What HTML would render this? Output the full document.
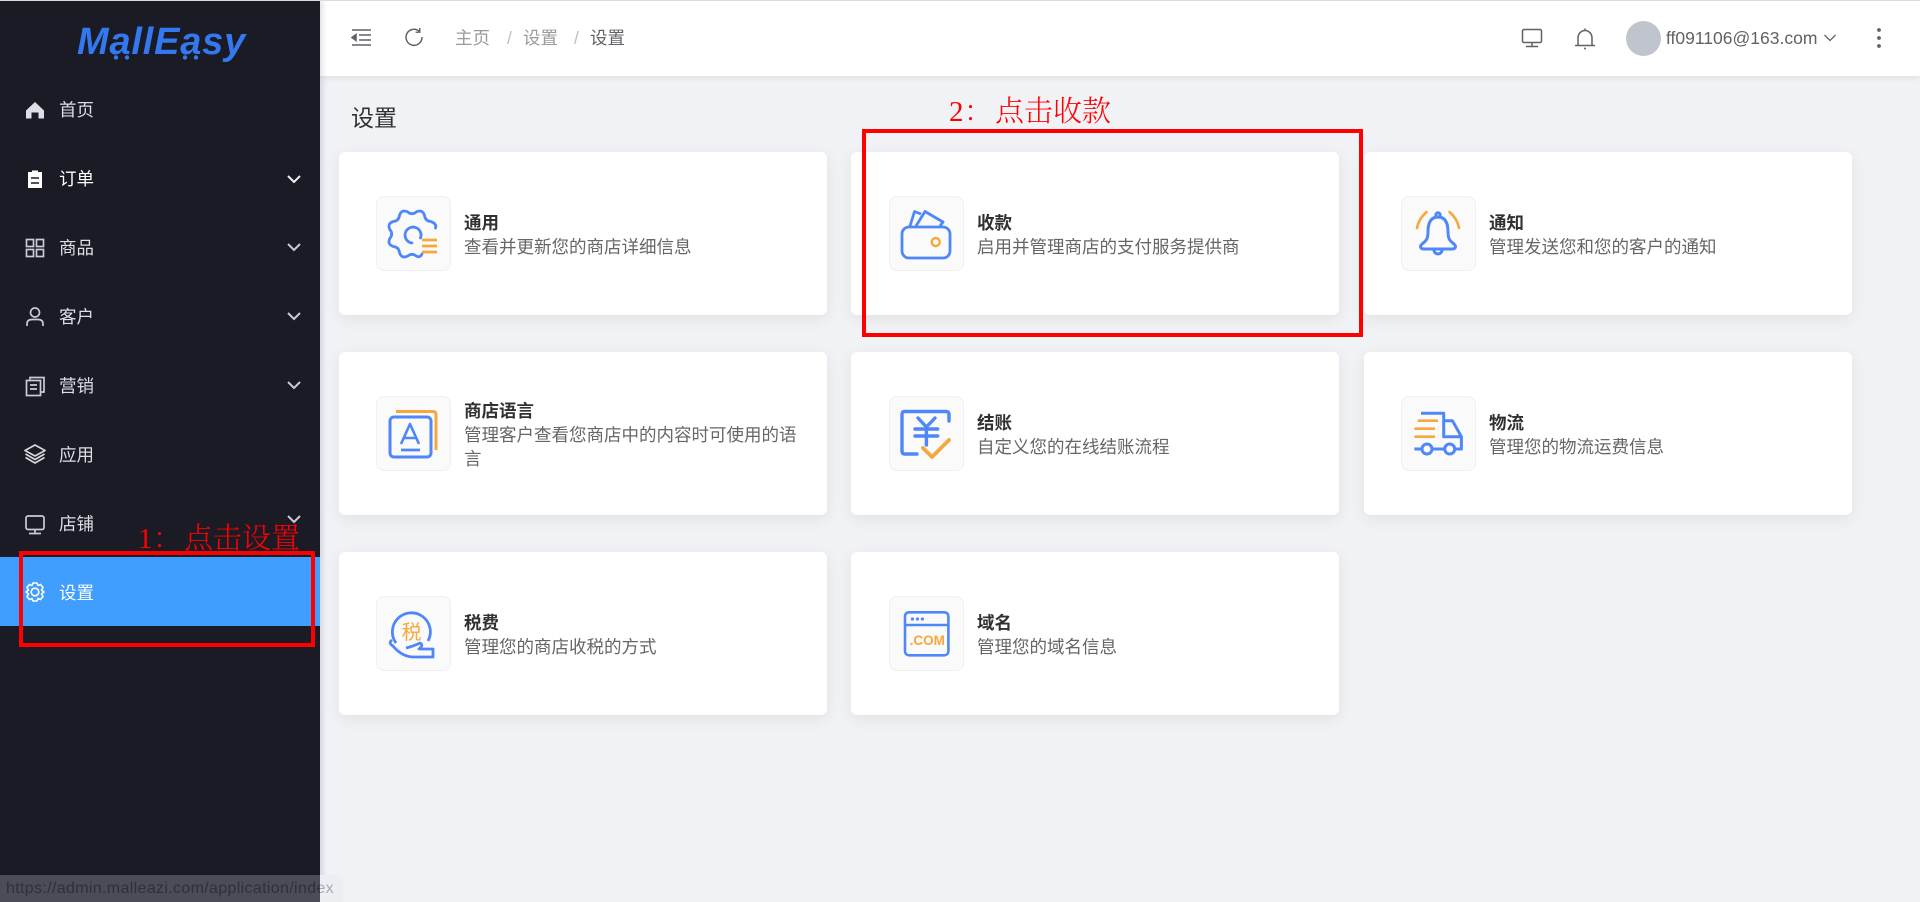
<!DOCTYPE html>
<html lang="zh-CN">
<head>
<meta charset="utf-8">
<title>设置</title>
<style>
*{box-sizing:border-box;margin:0;padding:0}
html,body{width:1920px;height:902px;overflow:hidden;background:#f0f2f5;font-family:"Liberation Sans","Noto Sans CJK SC",sans-serif;}
.abs{position:absolute}
#top{position:absolute;left:0;top:0;width:1920px;height:1px;background:#dcdcdc;z-index:9}
#side{position:absolute;left:0;top:0;width:320px;height:902px;background:#1a1b25;box-shadow:2px 0 6px rgba(0,21,41,.15);z-index:3}
.item{position:absolute;left:0;width:320px;height:69px;color:#dcdfe6;font-size:17.5px;line-height:69px}
.item span{position:absolute;left:59px;top:2px}
.item svg.i{position:absolute;left:24px;top:25px;width:22px;height:22px}
.item svg.c{position:absolute;left:286px;top:30px;width:16px;height:12px}
.item.on{background:#409eff;color:#fff}
#head{position:absolute;left:320px;top:0;width:1600px;height:76px;background:#fff;box-shadow:0 1px 6px rgba(0,21,41,.1);z-index:2}
.bc{position:absolute;top:26px;font-size:17.5px;line-height:24px;color:#9a9a9a}
#email{position:absolute;left:1346px;top:26px;font-size:17.5px;line-height:24px;color:#606266}
#title{position:absolute;left:351px;top:101px;font-size:23px;line-height:34px;color:#303133}
.card{position:absolute;width:487.5px;height:163px;background:#fff;border-radius:6px;box-shadow:0 4px 16px rgba(0,0,0,.07)}
.box{position:absolute;left:37px;top:44px;width:75px;height:75px;background:#fafafa;border:1px solid #f0f0f0;border-radius:8px}
.box svg{position:absolute;left:-1px;top:-1px;width:75px;height:75px}
.txt{position:absolute;left:125px;right:24px;top:58px;font-size:17.5px;line-height:24.5px;color:#666}
.txt.two{top:46px}
.txt b{display:block;color:#303133;font-weight:700;position:relative;top:1px}
.mid .box{left:38px}
.mid .txt{left:126px}
.red{position:absolute;border:4px solid #f00;z-index:6}
.note{position:absolute;color:#f00;font-family:"Liberation Serif","Noto Serif CJK SC",serif;font-weight:300;font-size:29px;line-height:36px;white-space:nowrap;z-index:6}
#status{position:absolute;left:0;top:875px;width:343px;height:27px;z-index:7;background:linear-gradient(90deg,#4b4c56 0,#4b4c56 320px,#eceef1 320px,#eceef1 343px);border-top-right-radius:6px}
#status span{position:absolute;left:6px;top:3px;font-size:16px;letter-spacing:.34px;line-height:21px;white-space:nowrap;background:linear-gradient(90deg,#2e2f39 0,#2e2f39 314px,#a9aab0 314px);-webkit-background-clip:text;background-clip:text;color:transparent}
</style>
</head>
<body>
<div id="top"></div>

<div id="side">
  <div class="abs" style="left:77px;top:19px;font-style:italic;font-weight:700;font-size:38px;line-height:46px;letter-spacing:.8px;color:#3478f0;white-space:nowrap">MallEasy</div>
  <svg class="abs" style="left:0;top:50px" width="320" height="16" fill="#3478f0"><circle cx="116" cy="7.500" r="2.200"/><circle cx="127" cy="7.500" r="2.200"/><circle cx="185" cy="7.500" r="2.200"/><circle cx="196" cy="7.500" r="2.200"/></svg>

  <div class="item" style="top:74px"><svg class="i" viewBox="0 0 22 22" fill="#dcdfe6"><path d="M11 3 L20 11.500 V19.500 H14.500 V13.500 H7.500 V19.500 H2 V11.500 Z"/></svg><span>首页</span></div>

  <div class="item" style="top:143px;color:#fff"><svg class="i" viewBox="0 0 22 22"><path fill="#fff" d="M4 4 H8 V2.500 H14 V4 H18 V20 H4 Z"/><path stroke="#1a1b25" stroke-width="1.600" d="M7 10 H15 M7 15 H15"/></svg><span>订单</span><svg class="c" viewBox="0 0 16 12" fill="none" stroke="#eef0f5" stroke-width="2"><path d="M2 3 L8 9 L14 3"/></svg></div>

  <div class="item" style="top:212px"><svg class="i" viewBox="0 0 22 22" fill="none" stroke="#c8ccd4" stroke-width="1.700"><rect x="2.500" y="2.500" width="7" height="7"/><rect x="12.500" y="2.500" width="7" height="7"/><rect x="2.500" y="12.500" width="7" height="7"/><rect x="12.500" y="12.500" width="7" height="7"/></svg><span>商品</span><svg class="c" style="top:29px" viewBox="0 0 16 12" fill="none" stroke="#c8ccd4" stroke-width="2"><path d="M2 3 L8 9 L14 3"/></svg></div>

  <div class="item" style="top:281px"><svg class="i" viewBox="0 0 22 22" fill="none" stroke="#c8ccd4" stroke-width="1.700"><circle cx="11" cy="6.500" r="4.500"/><path d="M3 20 V18 Q3 13.500 8 13.500 H14 Q19 13.500 19 18 V20"/></svg><span>客户</span><svg class="c" style="top:29px" viewBox="0 0 16 12" fill="none" stroke="#c8ccd4" stroke-width="2"><path d="M2 3 L8 9 L14 3"/></svg></div>

  <div class="item" style="top:350px"><svg class="i" viewBox="0 0 22 22" fill="none" stroke="#c8ccd4" stroke-width="1.700"><path d="M6 4.500 V2.500 H20 V17 H17"/><rect x="2.500" y="5.500" width="14" height="15"/><path d="M6 10 H13 M6 14 H13"/></svg><span>营销</span><svg class="c" style="top:29px" viewBox="0 0 16 12" fill="none" stroke="#c8ccd4" stroke-width="2"><path d="M2 3 L8 9 L14 3"/></svg></div>

  <div class="item" style="top:419px"><svg class="i" style="top:24px" viewBox="0 0 22 22" fill="none" stroke="#d4d7dd" stroke-width="1.700" stroke-linejoin="round"><path d="M11 2 L21 7.500 L11 13 L1 7.500 Z"/><path d="M1.500 11 L11 16.500 L20.500 11"/><path d="M1.500 14.500 L11 20 L20.500 14.500"/></svg><span>应用</span></div>

  <div class="item" style="top:488px"><svg class="i" viewBox="0 0 22 22" fill="none" stroke="#c8ccd4" stroke-width="1.700"><rect x="2" y="3" width="18" height="13.500" rx="2"/><path d="M11 16.500 V20 M5 20.500 H17"/></svg><span>店铺</span><svg class="c" style="top:25px" viewBox="0 0 16 12" fill="none" stroke="#c8ccd4" stroke-width="2"><path d="M2 3 L8 9 L14 3"/></svg></div>

  <div class="item on" style="top:557px"><svg class="i" style="top:24px" viewBox="0 0 22 22" fill="none" stroke="#fff" stroke-width="1.600" stroke-linejoin="round"><path d="M9 2 H13 L14 4.500 L16.500 3.500 L19 6.500 L17.500 9 L20 11 L17.500 13 L19 15.500 L16.500 18.500 L14 17.500 L13 20 H9 L8 17.500 L5.500 18.500 L3 15.500 L4.500 13 L2 11 L4.500 9 L3 6.500 L5.500 3.500 L8 4.500 Z"/><circle cx="11" cy="11" r="3.800"/></svg><span>设置</span></div>
</div>

<div id="head">
  <svg class="abs" style="left:31px;top:28px" width="22" height="18" viewBox="0 0 22 18" fill="none" stroke="#606266" stroke-width="1.500"><path d="M1 2 H20 M8 7 H20 M8 12 H20 M1 17 H20"/><path d="M1 9.500 L5 6.500 V12.500 Z" fill="#606266"/></svg>
  <svg class="abs" style="left:84px;top:27px" width="20" height="20" viewBox="0 0 20 20" fill="none" stroke="#606266" stroke-width="1.500"><path d="M15.500 4.500 A8 8 0 1 0 18 10"/><path d="M15.800 1 V5.200 H11.600" stroke-width="1.400"/></svg>
  <div class="bc" style="left:135px">主页</div>
  <div class="bc" style="left:187px;color:#b8c0cc">/</div>
  <div class="bc" style="left:203px">设置</div>
  <div class="bc" style="left:254px;color:#b8c0cc">/</div>
  <div class="bc" style="left:270px;color:#606266">设置</div>

  <svg class="abs" style="left:1201px;top:27px" width="22" height="22" viewBox="0 0 22 22" fill="none" stroke="#606266" stroke-width="1.500"><rect x="1.500" y="2.500" width="19" height="13" rx="1.500"/><path d="M11 15.500 V19.500 M5 19.500 H17"/></svg>
  <svg class="abs" style="left:1254px;top:27px" width="22" height="24" viewBox="0 0 22 24" fill="none" stroke="#606266" stroke-width="1.500"><path d="M1 18.500 H21 M4 18.500 V11 A7 7.500 0 0 1 18 11 V18.500"/><path d="M11 1.500 V3.500"/><circle cx="11" cy="21.500" r="1" fill="#606266" stroke="none"/></svg>
  <div class="abs" style="left:1306px;top:21px;width:35px;height:35px;border-radius:50%;background:#c0c4cc"></div>
  <div id="email">ff091106@163.com</div>
  <svg class="abs" style="left:1503px;top:33px" width="14" height="10" viewBox="0 0 14 10" fill="none" stroke="#606266" stroke-width="1.300"><path d="M1.500 2 L7 7.500 L12.500 2"/></svg>
  <svg class="abs" style="left:1555px;top:27px" width="8" height="22" viewBox="0 0 8 22" fill="#606266"><circle cx="4" cy="3" r="1.900"/><circle cx="4" cy="11" r="1.900"/><circle cx="4" cy="19" r="1.900"/></svg>
</div>

<div id="title">设置</div>

<div class="card" style="left:339px;top:152px">
  <div class="box"><svg viewBox="0 0 75 75" fill="none" stroke="#5087f8" stroke-width="2.800" stroke-linecap="round"><path d="M59.500 32 Q61 27.700 54.700 25.500 Q49.100 24.900 48.500 19.300 Q46.300 13.100 40.400 15.900 Q36 19.500 31.600 15.900 Q25.700 13.100 23.500 19.300 Q22.900 24.900 17.300 25.500 Q11 27.700 13.900 33.600 Q17.500 38 13.900 42.400 Q11 48.300 17.300 50.500 Q22.900 51.100 23.500 56.700 Q25.700 62.900 31.600 60.100 Q36 56.500 40.400 60.100 Q44 62 46 58"/><path d="M44.500 42 A8 8 0 1 0 36 47"/><path stroke="#f5a83c" stroke-width="2.800" stroke-linecap="butt" d="M46 44 H61 M46 50 H61 M46 56 H61"/></svg></div>
  <div class="txt"><b>通用</b>查看并更新您的商店详细信息</div>
</div>

<div class="card mid" style="left:851px;top:152px">
  <div class="box"><svg viewBox="0 0 75 75" fill="none" stroke="#5087f8" stroke-width="2.800" stroke-linejoin="round"><rect x="13" y="31" width="48" height="31" rx="7"/><path d="M21 30 L25.500 15.500 L32 18"/><path d="M27 30 L36 15.500 L54 26 L51 30"/><circle cx="46.700" cy="46" r="4" stroke="#f5a83c" stroke-width="2.400"/></svg></div>
  <div class="txt"><b>收款</b>启用并管理商店的支付服务提供商</div>
</div>

<div class="card" style="left:1364px;top:152px">
  <div class="box"><svg viewBox="0 0 75 75" fill="none" stroke="#5087f8" stroke-width="3" stroke-linejoin="round"><path d="M37 21 C29 21 27 28 27 36 C27 43 25 45 21 48 C18 51 20 53 23 53 H51 C54 53 56 51 53 48 C49 45 47 43 47 36 C47 28 45 21 37 21 Z"/><circle cx="37" cy="19" r="2.200"/><path d="M33 54 A4 4 0 0 0 41 54"/><path stroke="#f5a83c" stroke-width="2.600" stroke-linecap="round" d="M16 32 Q17.500 23 25.500 16 M58 32 Q56.500 23 48.500 16"/></svg></div>
  <div class="txt"><b>通知</b>管理发送您和您的客户的通知</div>
</div>

<div class="card" style="left:339px;top:352px">
  <div class="box"><svg viewBox="0 0 75 75" fill="none" stroke="#5087f8" stroke-width="3" stroke-linejoin="round"><rect x="14" y="21" width="41" height="40" rx="4"/><path d="M25 48 L34 28 L43 48 M28 42 H40" stroke-width="2.600"/><path d="M25 54 H44" stroke-width="2.800"/><path stroke="#f5a83c" stroke-width="3" d="M20 15.500 H57 Q60 15.500 60 18.500 V54"/></svg></div>
  <div class="txt two"><b>商店语言</b>管理客户查看您商店中的内容时可使用的语言</div>
</div>

<div class="card mid" style="left:851px;top:352px">
  <div class="box"><svg viewBox="0 0 75 75" fill="none" stroke="#5087f8" stroke-width="3.400" stroke-linecap="round" stroke-linejoin="round"><path d="M60 25 V18 Q60 15.500 57 15.500 H15.500 Q13 15.500 13 18 V55 Q13 58 15.500 58 H28"/><path d="M29 22 L37.400 31 L46 22 M26 33 H48.700 M26 40 H48.700 M37.400 31 V49"/><path stroke="#f5a83c" stroke-width="3.800" d="M34 52 L43 61 L60 44"/></svg></div>
  <div class="txt"><b>结账</b>自定义您的在线结账流程</div>
</div>

<div class="card" style="left:1364px;top:352px">
  <div class="box"><svg viewBox="0 0 75 75" fill="none" stroke="#5087f8" stroke-width="3" stroke-linejoin="round"><path d="M20 17.300 H42.700 V40.700 H60.400 M42.700 24.700 H51.400 L60.400 40.700 V53 H54"/><circle cx="26" cy="53" r="5"/><circle cx="48.700" cy="53" r="5"/><path d="M31 53 H43.700 M13.400 53 H21"/><path stroke="#f5a83c" stroke-width="2.600" d="M16.700 24.700 H37 M13.400 32.700 H34 M13.400 40.700 H34"/></svg></div>
  <div class="txt"><b>物流</b>管理您的物流运费信息</div>
</div>

<div class="card" style="left:339px;top:552px">
  <div class="box"><svg viewBox="0 0 75 75" fill="none" stroke="#5087f8" stroke-width="2.800" stroke-linejoin="round"><path d="M20 47 A19 19 0 1 1 52 45"/><path d="M16 44 Q12 47 17 50 Q26 61 38 61 H57 V53 H43 Q48 49 44 47 Q38 50 30 52"/><text x="35.500" y="43" text-anchor="middle" font-size="20" font-weight="400" fill="#f5a83c" stroke="none" font-family="Liberation Sans,Noto Sans CJK SC,sans-serif">税</text></svg></div>
  <div class="txt"><b>税费</b>管理您的商店收税的方式</div>
</div>

<div class="card mid" style="left:851px;top:552px">
  <div class="box"><svg viewBox="0 0 75 75" fill="none" stroke="#5087f8" stroke-width="2.600"><rect x="16" y="16.300" width="43.400" height="43" rx="4"/><path d="M16 29 H59.400"/><g fill="#5087f8" stroke="none"><circle cx="23.400" cy="23" r="1.600"/><circle cx="28.400" cy="23" r="1.600"/><circle cx="33.400" cy="23" r="1.600"/></g><text x="38.300" y="49" text-anchor="middle" font-size="13.500" font-weight="700" fill="#f5a83c" stroke="none" font-family="Liberation Sans,sans-serif">.COM</text></svg></div>
  <div class="txt"><b>域名</b>管理您的域名信息</div>
</div>

<div class="red" style="left:19px;top:551px;width:296px;height:96px"></div>
<div class="note" style="left:138px;top:521px">1</div>
<div class="note" style="left:153px;top:521px">：</div>
<div class="note" style="left:184px;top:521px">点击设置</div>

<div class="red" style="left:862px;top:129px;width:501px;height:208px"></div>
<div class="note" style="left:949px;top:94px">2</div>
<div class="note" style="left:964px;top:94px">：</div>
<div class="note" style="left:995px;top:94px">点击收款</div>

<div id="status"><span>https://admin.malleazi.com/application/index</span></div>
</body>
</html>
